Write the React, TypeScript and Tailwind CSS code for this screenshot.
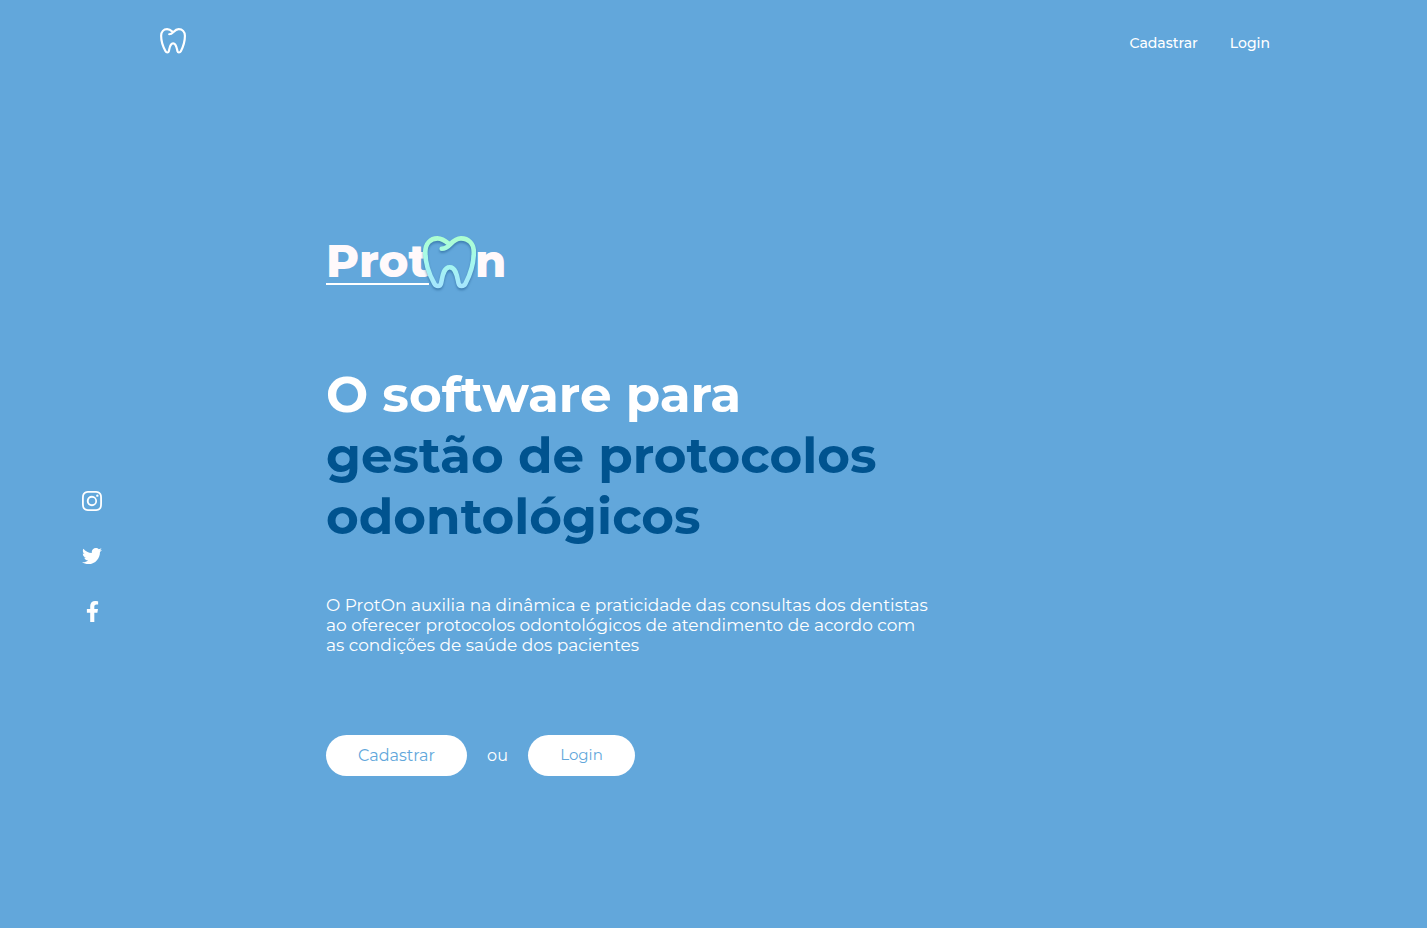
import React from "react";
import { FaFacebookF, FaTwitter } from "react-icons/fa";
import { BsInstagram } from "react-icons/bs";

const TOOTH =
  "M18.7 12.8C22.5 12.8 25 10.8 27.5 8.2C30.5 5 33.5 2.4 38 2.4C45.5 2.4 50.8 7.5 50.8 16C50.8 28 47 39 42.5 47.5C41.6 49.3 40.4 50 38.6 50C36.8 50 36 49.2 35.6 47.5C34.2 41.5 33.4 31.2 26.7 31.2C20 31.2 19.4 41.5 18 47.5C17.6 49.2 16.8 50 15 50C13.2 50 12.2 49.3 11.3 47.5C6.5 39 2.3 28 2.3 16C2.3 7.5 7.5 2.4 14.5 2.4C18.5 2.4 21.5 4.2 26 8";

function Tooth({ className, stroke, width }: { className: string; stroke: string; width: number }) {
  return (
    <svg viewBox="0 0 53 53" className={className} fill="none" aria-hidden="true">
      <defs>
        <linearGradient id="mint" x1="0" y1="0" x2="0" y2="53" gradientUnits="userSpaceOnUse">
          <stop offset="0" stopColor="#adffcf" />
          <stop offset="0.5" stopColor="#a5f8ee" />
          <stop offset="1" stopColor="#a6e4ff" />
        </linearGradient>
      </defs>
      <path d={TOOTH} stroke={stroke} strokeWidth={width} strokeLinecap="round" strokeLinejoin="round" />
    </svg>
  );
}

export default function App() {
  return (
    <div className="flex min-h-screen flex-col bg-[#62a7db] font-['Montserrat','Inter',sans-serif] text-white">
      <header className="flex items-center justify-between px-[11%] pt-7">
        <a href="#inicio" aria-label="ProtOn" className="ml-[3px]">
          <Tooth className="size-[26px]" stroke="#ffffff" width={4.4} />
        </a>
        <nav className="flex items-center gap-8 pt-1 text-sm leading-5 font-medium">
          <a href="#cadastrar">Cadastrar</a>
          <a href="#login">Login</a>
        </nav>
      </header>

      <div className="flex flex-1 items-start">
        <aside className="flex w-[326px] shrink-0 flex-col gap-[35px] pt-[437px] pl-[82px]">
          <a href="#instagram" aria-label="Instagram" className="w-fit"><BsInstagram size={20} /></a>
          <a href="#twitter" aria-label="Twitter" className="w-fit"><FaTwitter size={20} /></a>
          <a href="#facebook" aria-label="Facebook" className="w-fit"><FaFacebookF size={21} /></a>
        </aside>

        <main className="min-w-0 flex-1 pt-[182px] pr-8 pb-16">
          <div className="flex h-14 items-start text-[45px] leading-[48px] font-extrabold text-[#fff9fb]">
            <span className="relative w-[105px] pt-px">
              Prot
              <span className="absolute bottom-0 left-0 h-0.5 w-[103px] bg-white" />
            </span>
            <Tooth
              className="relative -ml-2 size-[53px] shrink-0 drop-shadow-[0_2px_1px_rgba(30,90,140,0.5)]"
              stroke="url(#mint)"
              width={4.6}
            />
            <span className="-ml-px pt-px">n</span>
          </div>

          <h1 className="mt-[72px] text-[50px] leading-[61px] font-bold">
            O software para
            <span className="block text-[#00538f]">gestão de protocolos</span>
            <span className="block text-[#00538f]">odontológicos</span>
          </h1>

          <p className="mt-12 text-[17px] leading-5">
            O ProtOn auxilia na dinâmica e praticidade das consultas dos dentistas
            <br />
            ao oferecer protocolos odontológicos de atendimento de acordo com
            <br />
            as condições de saúde dos pacientes
          </p>

          <div className="mt-20 flex items-center text-base">
            <button type="button" className="h-[41px] w-[141px] rounded-full bg-white text-[#62a7db]">
              Cadastrar
            </button>
            <span className="w-[61px] text-center">ou</span>
            <button type="button" className="h-[41px] w-[107px] rounded-full bg-white text-[15px] text-[#62a7db]">
              Login
            </button>
          </div>
        </main>
      </div>
    </div>
  );
}
